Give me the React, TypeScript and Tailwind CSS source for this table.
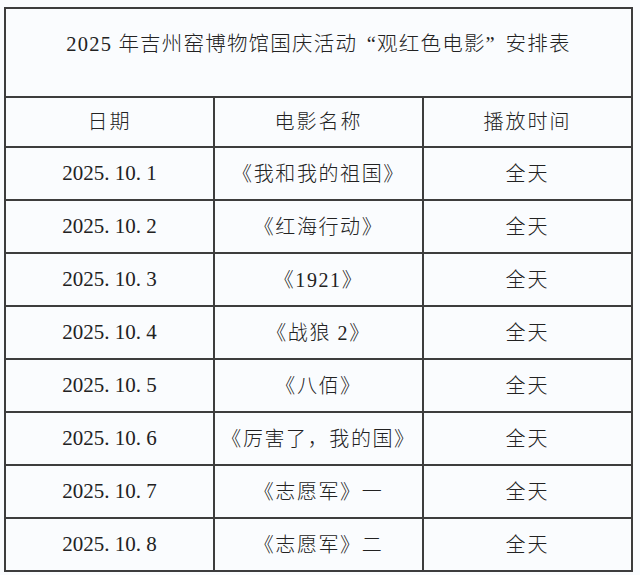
import React from "react";

const rows: [string, React.ReactNode][] = [
  ["2025. 10. 1", "《我和我的祖国》"],
  ["2025. 10. 2", "《红海行动》"],
  ["2025. 10. 3", "《1921》"],
  ["2025. 10. 4", "《战狼 2》"],
  ["2025. 10. 5", "《八佰》"],
  ["2025. 10. 6", "《厉害了，我的国》"],
  ["2025. 10. 7", "《志愿军》一"],
  ["2025. 10. 8", "《志愿军》二"],
];

const font = "[font-family:'Liberation_Serif','Noto_Sans_CJK_SC',serif]";

export default function App() {
  return (
    <div className={`w-[640px] h-[575px] bg-[#fafcfe] pt-[7px] pl-[4px] text-[#222] ${font}`}>
      <div className="w-[629px] grid grid-cols-3 grid-rows-[87px_48px_repeat(8,51px)] gap-[2px] p-[2px] bg-[#3d3d3d]">
        <div className="col-span-3 bg-[#fafcfe] flex items-center justify-center pb-[16px] text-[20.5px] tracking-[1.2px] font-light">
          <span>2025 年吉州窑博物馆国庆活动</span>
          <span className="inline-block w-[20px] text-right">“</span>
          <span>观红色电影</span>
          <span className="inline-block w-[20px] text-left">”</span>
          <span>安排表</span>
        </div>
        {["日期", "电影名称", "播放时间"].map((h) => (
          <div key={h} className="bg-[#fafcfe] flex items-center justify-center text-[20px] tracking-[2px] font-light">
            {h}
          </div>
        ))}
        {rows.map(([d, m]) => (
          <React.Fragment key={d}>
            <div className="bg-[#fafcfe] flex items-center justify-center text-[21px]">{d}</div>
            <div className="bg-[#fafcfe] flex items-center justify-center text-[20px] tracking-[1.6px] font-light">{m}</div>
            <div className="bg-[#fafcfe] flex items-center justify-center text-[20px] tracking-[2px] font-light">全天</div>
          </React.Fragment>
        ))}
      </div>
    </div>
  );
}
